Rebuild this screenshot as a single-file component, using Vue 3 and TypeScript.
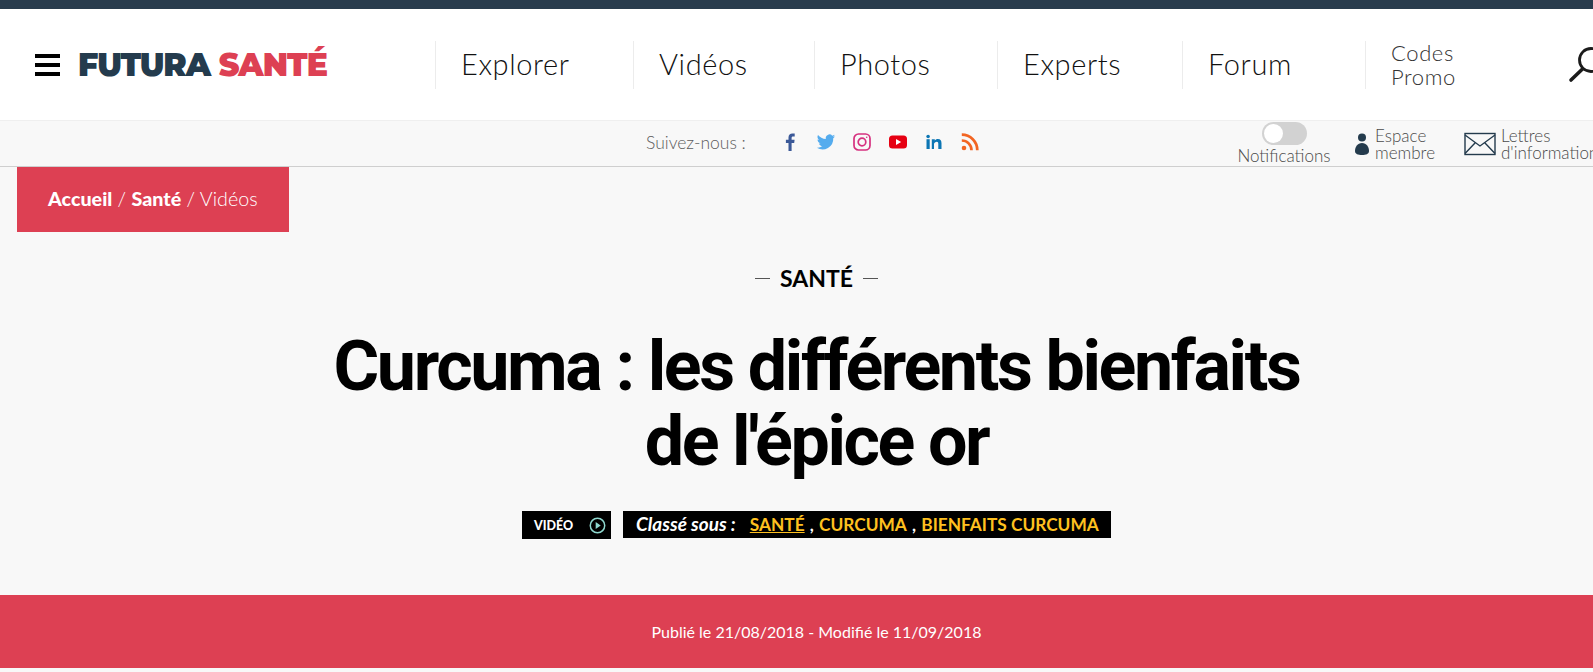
<template>
  <div class="page">
    <div class="top-line"></div>
    <header class="header">
      <div class="burger"><span></span><span></span><span></span></div>
      <div class="logo"><span class="logo-dark">FUTURA</span> <span class="logo-red">SANTÉ</span></div>
      <nav class="nav">
        <a v-for="item in navItems" :key="item.label" class="nav-item" :style="{ width: item.width + 'px' }">{{ item.label }}</a>
        <a class="nav-item nav-codes">Codes<br />Promo</a>
      </nav>
      <svg class="search" width="36" height="38" viewBox="0 0 36 38" fill="none" stroke="#1b1b1b">
        <circle cx="23" cy="14" r="11.5" stroke-width="2.8" />
        <path d="M14.5 23 L3 34" stroke-width="3.6" stroke-linecap="round" />
      </svg>
    </header>

    <div class="subbar">
      <span class="follow">Suivez-nous :</span>
      <div class="socials">
        <svg width="20" height="20" viewBox="0 0 20 20"><path fill="#3b5998" d="M11.6 19V10.9h2.6l.4-3.1h-3V5.9c0-.9.3-1.5 1.5-1.5h1.6V1.6C14.400 1.500 13.500 1.400 12.400 1.400 10.100 1.400 8.500 2.800 8.500 5.400v2.400H5.900v3.100h2.600V19z" /></svg>
        <svg width="20" height="20" viewBox="0 0 24 24"><path fill="#55acee" d="M23 5.100c-.8.400-1.700.6-2.600.7.900-.6 1.600-1.400 2-2.500-.9.500-1.800.9-2.900 1.100A4.500 4.500 0 0 0 11.800 8.500C8 8.300 4.600 6.500 2.400 3.700c-1.200 2.100-.6 4.700 1.400 6-.7 0-1.400-.2-2-.6 0 2.200 1.500 4.100 3.600 4.600-.7.200-1.400.2-2 .1.600 1.800 2.300 3.100 4.200 3.100A9.100 9.100 0 0 1 1 18.800a12.800 12.800 0 0 0 19.700-11.400c.9-.6 1.700-1.400 2.300-2.300z" /></svg>
        <svg width="20" height="20" viewBox="0 0 20 20" fill="none" stroke="#d6307f" stroke-width="1.700"><rect x="2" y="2" width="16" height="16" rx="4.500" /><circle cx="10" cy="10" r="3.800" /><circle cx="14.700" cy="5.300" r=".8" fill="#d6307f" stroke="none" /></svg>
        <svg width="20" height="20" viewBox="0 0 20 20"><rect x="1" y="3.500" width="18" height="13" rx="3.500" fill="#e60012" /><path fill="#fff" d="M8 7l5.200 3L8 13z" /></svg>
        <svg width="20" height="20" viewBox="0 0 20 20"><g fill="#0c76b4"><rect x="2.500" y="7.200" width="3.200" height="9.800" /><circle cx="4.100" cy="4.500" r="1.800" /><path d="M7.800 7.200h3v1.400c.6-1 1.700-1.700 3.100-1.700 2.700 0 3.600 1.700 3.600 4.300V17h-3.200v-5.100c0-1.300-.4-2.200-1.500-2.200-1.300 0-2.800.9-2.800 2.400V17H7.800z" /></g></svg>
        <svg width="20" height="20" viewBox="0 0 20 20" fill="none" stroke="#f26522" stroke-width="2.700"><circle cx="4" cy="16" r="2.300" fill="#f26522" stroke="none" /><path d="M1.800 8.500a9.700 9.700 0 0 1 9.700 9.700" /><path d="M1.800 2.700a15.500 15.500 0 0 1 15.500 15.500" /></svg>
      </div>
      <div class="notif">
        <div class="toggle"><span class="knob"></span></div>
        <span class="notif-label">Notifications</span>
      </div>
      <div class="tool tool-member">
        <svg width="16" height="26" viewBox="0 0 16 26" fill="#243b4d"><circle cx="8" cy="6.500" r="4" /><path d="M8 12c-4.500 0-7 4-7 8 0 3 3 4 7 4s7-1 7-4c0-4-2.500-8-7-8z" /></svg>
        <span>Espace<br />membre</span>
      </div>
      <div class="tool tool-letters">
        <svg width="32" height="24" viewBox="0 0 32 24" fill="none" stroke="#243b4d" stroke-width="1.400"><rect x="1" y="1.500" width="30" height="21" /><path d="M1 3l15 11L31 3M1 21.500l10-10.500M31 21.500L21 11" /></svg>
        <span>Lettres<br />d'informations</span>
      </div>
    </div>

    <main class="main">
      <div class="crumb"><b>Accueil</b> / <b>Santé</b> / Vidéos</div>
      <div class="section"><i class="dash"></i><span>SANTÉ</span><i class="dash"></i></div>
      <h1 class="title">Curcuma : les différents bienfaits<br />de l'épice or</h1>
      <div class="tags">
        <div class="tag-video">
          <span>VIDÉO</span>
          <svg width="17" height="17" viewBox="0 0 16 16" fill="none"><circle cx="8" cy="8" r="6.800" stroke="#8fd8cf" stroke-width="1.400" /><path d="M6.300 4.800L11 8l-4.700 3.200z" fill="#8fd8cf" /></svg>
        </div>
        <div class="tag-list">
          <em>Classé sous :</em>
          <a class="first">SANTÉ</a><span class="comma"> , </span><a>CURCUMA</a><span class="comma"> , </span><a>BIENFAITS CURCUMA</a>
        </div>
      </div>
    </main>

    <div class="dates">Publié le 21/08/2018 - Modifié le 11/09/2018</div>
  </div>
</template>

<script setup lang="ts">
const navItems = [
  { label: "Explorer", width: 198 },
  { label: "Vidéos", width: 181 },
  { label: "Photos", width: 183 },
  { label: "Experts", width: 185 },
  { label: "Forum", width: 183 },
];
</script>

<style>
html,
body {
  margin: 0;
  overflow: hidden;
  background: #fff;
}
</style>

<style scoped>
.page {
  width: 1593px;
  height: 672px;
  overflow: hidden;
  font-family: Lato, "Liberation Sans", sans-serif;
  background: #f8f8f8;
}

.top-line {
  height: 9px;
  background: #293c4d;
}

.header {
  height: 111px;
  background: #fff;
  display: flex;
  align-items: center;
  padding-left: 35px;
  border-bottom: 1px solid #efefef;
}

.burger {
  flex: none;
  width: 25px;
  display: flex;
  flex-direction: column;
  gap: 5px;
  margin-right: 18px;
}

.burger span {
  height: 4px;
  background: #000;
}

.logo {
  flex: none;
  width: 357px;
  font-family: Montserrat, Inter, sans-serif;
  font-weight: 900;
  font-size: 31.5px;
  letter-spacing: -1px;
  white-space: nowrap;
}

.logo-dark {
  color: #243b4d;
}

.logo-red {
  color: #dd4053;
}

.nav {
  flex: none;
  display: flex;
  align-items: center;
}

.nav-item {
  flex: none;
  box-sizing: border-box;
  height: 48px;
  display: flex;
  align-items: center;
  padding: 0 0 2px 25px;
  border-left: 1px solid #ececec;
  font-weight: 300;
  font-size: 29px;
  color: #111;
  letter-spacing: 0.6px;
}

.nav-codes {
  width: 203px;
  display: block;
  font-size: 22px;
  line-height: 24px;
  color: #333;
}

.search {
  flex: none;
}

.subbar {
  height: 45px;
  border-bottom: 1px solid #cfcfcf;
  overflow: hidden;
  display: flex;
  align-items: center;
  padding-left: 646px;
  font-weight: 300;
  color: #4a4a4a;
  font-size: 17px;
}

.follow {
  flex: none;
  width: 134px;
  font-size: 17.5px;
  color: #5c5c5c;
  padding-bottom: 3px;
}

.socials {
  flex: none;
  display: flex;
  gap: 16px;
  width: 438px;
  padding-bottom: 4px;
}

.notif {
  flex: none;
  width: 116px;
  display: flex;
  flex-direction: column;
  align-items: center;
  margin-left: 8px;
}

.toggle {
  width: 45px;
  height: 23px;
  border-radius: 12px;
  background: #d2d2d2;
  position: relative;
}

.knob {
  position: absolute;
  left: 2px;
  top: 2px;
  width: 19px;
  height: 19px;
  border-radius: 50%;
  background: #fff;
}

.notif-label {
  line-height: 19px;
  padding-top: 1px;
}

.tool {
  flex: none;
  display: flex;
  align-items: center;
  gap: 5px;
  line-height: 17px;
  white-space: nowrap;
}

.tool-member {
  margin-left: 12px;
  width: 110px;
}

.main {
  position: relative;
  box-sizing: border-box;
  height: 428px;
  padding-left: 40px;
  display: flex;
  flex-direction: column;
  align-items: center;
}

.crumb {
  position: absolute;
  left: 17px;
  top: 0;
  width: 272px;
  height: 65px;
  box-sizing: border-box;
  padding-left: 31px;
  background: #dd4053;
  color: #fff;
  font-size: 19.7px;
  font-weight: 300;
  line-height: 63px;
}

.crumb b {
  font-weight: 900;
}

.section {
  margin-top: 97px;
  display: flex;
  align-items: center;
  gap: 10px;
  color: #000;
  font-size: 23px;
  font-weight: 700;
  line-height: 28px;
}

.dash {
  width: 15px;
  height: 1px;
  background: #555;
}

.title {
  margin: 37px 0 0;
  text-align: center;
  font-family: Roboto, Lato, sans-serif;
  font-size: 70px;
  line-height: 75px;
  font-weight: 700;
  letter-spacing: -2.4px;
  color: #000;
  white-space: nowrap;
}

.tags {
  margin-top: 32px;
  display: flex;
  gap: 12px;
  align-items: flex-start;
}

.tag-video {
  box-sizing: border-box;
  width: 89px;
  height: 28px;
  padding: 0 5px 0 12px;
  background: #000;
  color: #fff;
  font-size: 12.5px;
  font-weight: 900;
  display: flex;
  align-items: center;
  justify-content: space-between;
}

.tag-list {
  box-sizing: border-box;
  width: 488px;
  height: 27px;
  padding-left: 13px;
  background: #000;
  font-size: 17.3px;
  font-weight: 700;
  line-height: 25px;
  white-space: nowrap;
  color: #ffc01f;
}

.tag-list em {
  color: #fff;
  font-size: 19px;
  margin-right: 14px;
}

.first {
  text-decoration: underline;
}

.comma {
  color: #fff;
  padding: 0 1px;
}

.dates {
  box-sizing: border-box;
  height: 73px;
  padding-left: 40px;
  background: #dd4053;
  color: #fff;
  font-size: 16px;
  display: flex;
  align-items: center;
  justify-content: center;
}
</style>
